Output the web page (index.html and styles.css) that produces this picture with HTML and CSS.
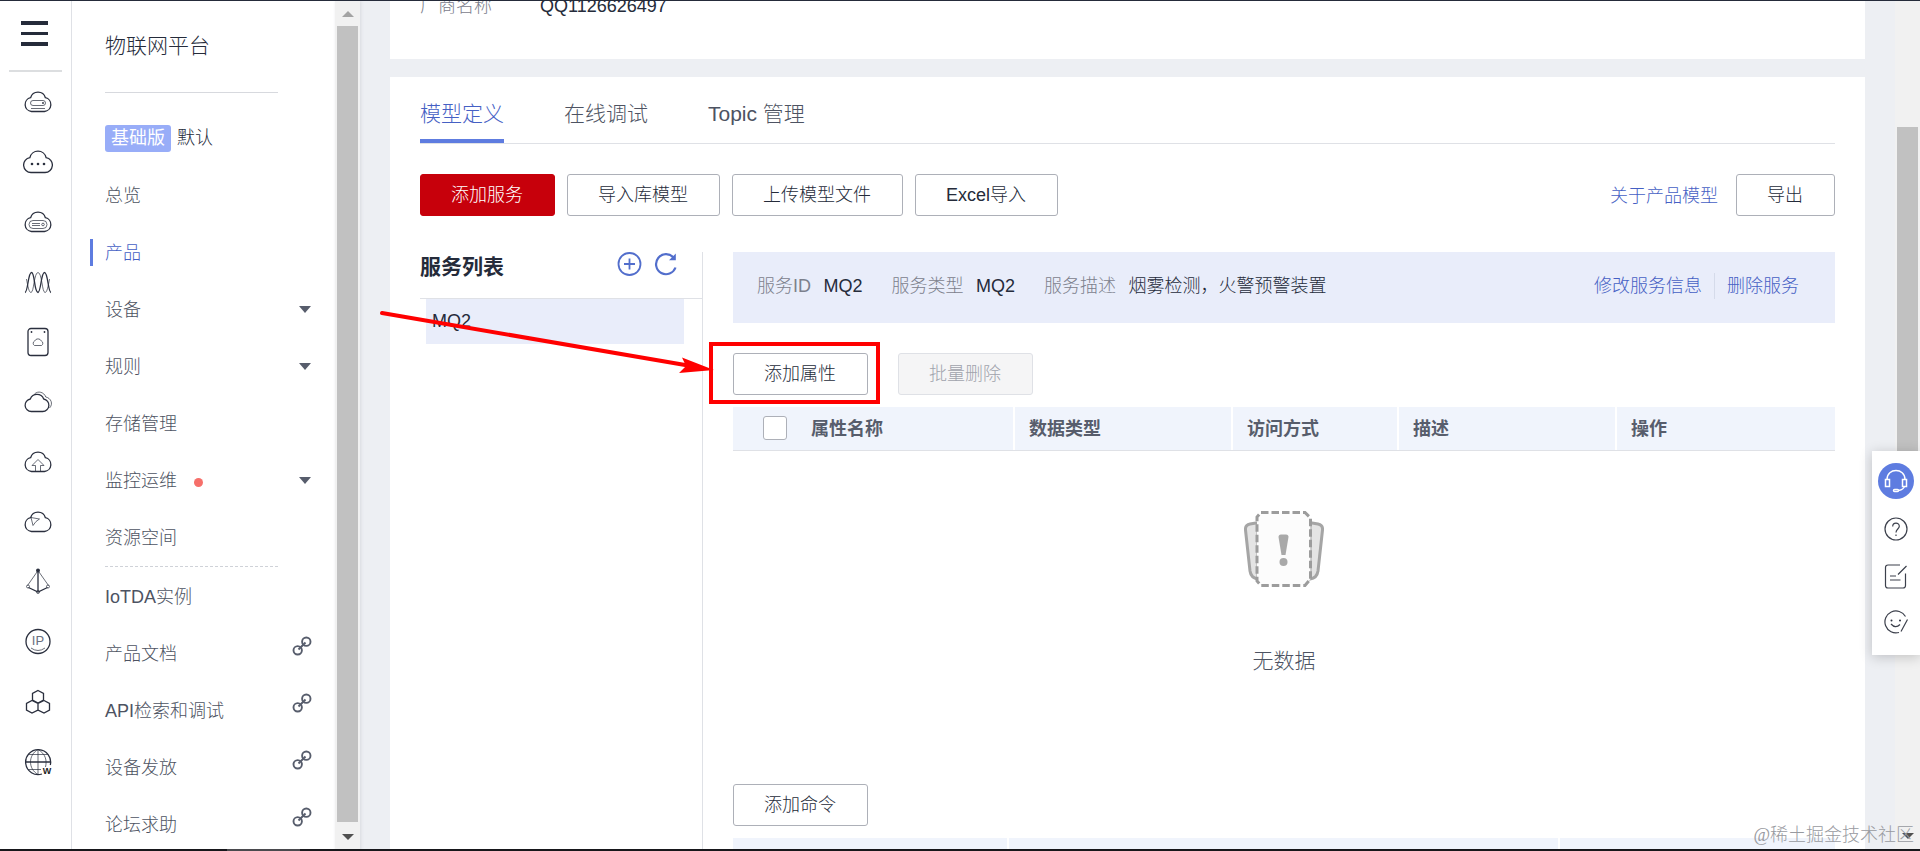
FILE: index.html
```html
<!DOCTYPE html>
<html lang="zh-CN">

<head>
  <meta charset="UTF-8">
  <meta name="viewport" content="width=device-width, initial-scale=1.0">
  <title>物联网平台</title>
  <link rel="stylesheet" href="styles.css">
</head>

<body>
  <!-- shared icon shapes -->
  <svg class="defs" width="0" height="0">
    <symbol id="cloud" viewBox="0 0 30 30">
      <path d="M8.5 24.5A7 7 0 0 1 7.6 10.7A7.7 7.7 0 0 1 22.4 10.7A7 7 0 0 1 21.5 24.5Z" />
    </symbol>
    <symbol id="link" viewBox="0 0 20 20">
      <circle cx="5.700" cy="14.300" r="4.200" />
      <circle cx="14.300" cy="5.700" r="4.200" />
      <path d="M6.500 13.500L13.500 6.500" />
    </symbol>
  </svg>

  <nav class="rail">
    <div class="hamburger"><span></span><span></span><span></span></div>
    <div class="rail-icons">
      <svg viewBox="0 0 30 30"><use href="#cloud" /><g class="thin"><rect x="7.500" y="13.500" width="15" height="5" rx="2.500" /><path d="M8 21.500h14" /></g><circle class="dot" cx="20" cy="16" r=".9" /></svg>
      <svg viewBox="0 0 30 30"><path d="M8 25.500A7.500 7.500 0 0 1 6.900 10.600A8.300 8.300 0 0 1 23.100 10.600A7.500 7.500 0 0 1 22 25.500Z" /><circle class="dot" cx="9" cy="17" r="1.300" /><circle class="dot" cx="15" cy="17" r="1.300" /><circle class="dot" cx="21" cy="17" r="1.300" /></svg>
      <svg viewBox="0 0 30 30"><use href="#cloud" /><g class="thin"><rect x="6" y="13.500" width="18" height="8" rx="4" /><path d="M9 16.500h8M9 18.500h8" /><circle cx="20" cy="17.500" r="1.300" /></g></svg>
      <svg viewBox="0 0 30 30"><path d="M2 25.500C5 25 5 5.500 8.500 5.500S11 25 15 25.500C18 25 18 5.500 21.500 5.500S25 25 28 25.500" /><g class="thin"><path d="M3.500 12C5 20 6 25.500 8 25.500C11 25.500 11 5.500 15 5.500S19 25.500 22 25.500C24 25.500 25 20 26.500 12" /></g></svg>
      <svg viewBox="0 0 30 30"><rect x="5" y="1.500" width="20" height="27" rx="3" /><path class="thin" d="M11.500 18.500A2.500 2.500 0 0 1 11.700 14A3.600 3.600 0 0 1 18.300 14A2.500 2.500 0 0 1 18.500 18.500Z" /><circle class="dot" cx="8.500" cy="5" r=".9" /><circle class="dot" cx="21.500" cy="5" r=".9" /></svg>
      <svg viewBox="0 0 30 30"><path d="M8.300 24.500A6.300 6.300 0 0 1 7.300 12A7.200 7.200 0 0 1 20.700 12A6.300 6.300 0 0 1 19.700 24.500Z" /><path class="thin" d="M11.500 7C15 3.500 21 5 22.800 10C28 11 30.500 17 26.500 21" /></svg>
      <svg viewBox="0 0 30 30"><use href="#cloud" /><path class="thin" d="M12.500 24V18.500H9L15 12.500L21 18.500H17.500V24" /></svg>
      <svg viewBox="0 0 30 30"><use href="#cloud" /><path class="thin" d="M8 10.500L16.500 12L13 14.500L10 18.500Z" /></svg>
      <svg viewBox="0 0 30 30"><path d="M15 3.500V24M5.500 20.500L15 25L24.500 20.500" /><g class="thin"><path d="M14 5L4.500 18.500M16 5L25.500 18.500" /><circle cx="5" cy="19.500" r="1.500" /><circle cx="25" cy="19.500" r="1.500" /><circle cx="15" cy="25" r="1.500" /></g><circle class="dot" cx="15" cy="3.500" r="2" /></svg>
      <svg viewBox="0 0 30 30"><circle cx="15" cy="14.500" r="12" /><path class="thin" d="M8 21Q15 26 22 21" /><text x="15" y="18" text-anchor="middle">IP</text></svg>
      <svg viewBox="0 0 30 30"><path d="M15 3.500L20.500 6.500V13L15 16L9.500 13V6.500ZM9 13.500L15 16.500V23L9 26L3.500 23V16.500ZM21 13.500L26.500 16.500V23L21 26L15 23V16.500Z" /></svg>
      <svg viewBox="0 0 30 30"><path d="M27.300 18A12.500 12.500 0 1 0 19 27M2.500 15H27.500" /><path class="thin" d="M15 2.500V27.500M15 2.500C5 8 5 22 15 27.500M15 2.500C23 7 24 14 22.500 20M5 7.500H25M5 22.500H18" /><text class="w" x="24" y="26.500" text-anchor="middle">W</text></svg>
    </div>
  </nav>

  <aside class="menu">
    <h1 class="menu-title">物联网平台</h1>
    <div class="edition"><span class="badge">基础版</span><span class="edition-name">默认</span></div>
    <ul class="menu-list">
      <li><span>总览</span></li>
      <li class="active"><span>产品</span></li>
      <li><span>设备</span><i class="caret"></i></li>
      <li><span>规则</span><i class="caret"></i></li>
      <li><span>存储管理</span></li>
      <li><span>监控运维</span><i class="red-dot"></i><i class="caret"></i></li>
      <li><span>资源空间</span></li>
    </ul>
    <ul class="menu-list extra">
      <li><span>IoTDA实例</span></li>
      <li><span>产品文档</span><svg class="link"><use href="#link" /></svg></li>
      <li><span>API检索和调试</span><svg class="link"><use href="#link" /></svg></li>
      <li><span>设备发放</span><svg class="link"><use href="#link" /></svg></li>
      <li><span>论坛求助</span><svg class="link"><use href="#link" /></svg></li>
    </ul>
  </aside>

  <div class="scrollbar side-scroll">
    <i class="arrow up"></i>
    <div class="thumb"></div>
    <i class="arrow down"></i>
  </div>

  <main class="content">
    <section class="panel vendor">
      <span class="vendor-label">厂商名称</span>
      <span>QQ1126626497</span>
    </section>

    <section class="panel model">
      <div class="tabs">
        <a class="tab current">模型定义</a>
        <a class="tab">在线调试</a>
        <a class="tab">Topic 管理</a>
      </div>

      <div class="toolbar">
        <button class="btn primary">添加服务</button>
        <button class="btn">导入库模型</button>
        <button class="btn">上传模型文件</button>
        <button class="btn">Excel导入</button>
        <a class="about">关于产品模型</a>
        <button class="btn">导出</button>
      </div>

      <div class="columns">
        <div class="services">
          <div class="services-head">
            <h2>服务列表</h2>
            <svg width="26" height="26" viewBox="0 0 26 26"><circle cx="12.500" cy="13" r="11" /><path d="M12.500 7.500v11M7 13h11" /></svg>
            <svg class="refresh" width="26" height="26" viewBox="0 0 26 26"><path d="M22.500 16.500A10 10 0 1 1 20.500 6.500" /><path class="fill" d="M22.800 2.500V9.300H16Z" /></svg>
          </div>
          <div class="service-item">MQ2</div>
        </div>

        <div class="detail">
          <div class="info">
            <span class="info-label">服务ID</span><span class="info-value">MQ2</span>
            <span class="info-label">服务类型</span><span class="info-value">MQ2</span>
            <span class="info-label">服务描述</span><span class="info-value">烟雾检测，火警预警装置</span>
            <div class="info-links"><a>修改服务信息</a><a>删除服务</a></div>
          </div>

          <div class="actions">
            <button class="btn">添加属性</button>
            <button class="btn" disabled>批量删除</button>
          </div>

          <div class="table-head">
            <div><i class="checkbox"></i>属性名称</div>
            <div>数据类型</div>
            <div>访问方式</div>
            <div>描述</div>
            <div>操作</div>
          </div>

          <div class="empty">
            <svg width="80" height="76" viewBox="0 0 80 76">
              <path class="back" d="M12 12L6 13Q1 14 1.500 19L6 60Q7 67 14 68V12Z" />
              <path class="back" d="M68 12L74 13Q79 14 78.500 19L74 60Q73 67 66 68V12Z" />
              <path class="front" d="M17 1.500H61L66.500 7V68L61 74.500H17L13 70V6Z" />
              <path class="mark" d="M34.500 26Q34.500 23.500 37 23.500H42Q44.500 23.500 44.500 26L41.500 44H37.500Z" />
              <circle class="mark" cx="39.500" cy="51" r="4" />
            </svg>
            <p>无数据</p>
          </div>

          <button class="btn add-command">添加命令</button>
          <div class="table-head command-head">
            <div></div>
            <div></div>
            <div></div>
          </div>
        </div>
      </div>
    </section>
  </main>

  <div class="scrollbar page-scroll">
    <div class="thumb"></div>
    <i class="arrow down"></i>
  </div>

  <div class="helper">
    <span class="service-btn">
      <svg width="24" height="24" viewBox="0 0 24 24"><path d="M3 10.500C3 -1.500 21 -1.500 21 10.500M20.500 17C20 20 17.500 21 14.500 21.500" /><rect x="1.500" y="10.500" width="4" height="7" /><rect x="18.500" y="10.500" width="4" height="7" /><rect x="9.500" y="20.500" width="5" height="2" rx="1" /></svg>
    </span>
    <svg width="26" height="26" viewBox="0 0 26 26"><circle cx="13" cy="13" r="11" /><path d="M9.700 10.500C9.700 6 16.300 6 16.300 10.300C16.300 13 13 13.200 13 16.500M13 18.500v1.500" /></svg>
    <svg width="26" height="26" viewBox="0 0 26 26"><path d="M17 2H5Q2.500 2 2.500 4.500V22.500Q2.500 25 5 25H20Q22.500 25 22.500 22.500V10.500M23.500 3L15 11.500M7 13H13M7 17H17.500" /></svg>
    <svg width="26" height="26" viewBox="0 0 26 26"><path d="M22.500 6.500A11 11 0 1 0 16 22.500M24.500 9.500L18 21.500M8 14Q12.500 19 17 14.500" /><circle class="dot" cx="8.500" cy="10.500" r="1" /><circle class="dot" cx="17" cy="10.500" r="1" /></svg>
  </div>

  <!-- red pointer and box around the add button -->
  <svg class="pointer" width="336" height="70" viewBox="0 0 336 70">
    <path class="shaft" d="M3 5L312 58" />
    <path class="head" d="M303 49.500L335 62L300 65L307 58Z" />
  </svg>
  <div class="red-box"></div>

  <div class="watermark">@稀土掘金技术社区</div>
  <div class="bottom-line"></div>
</body>

</html>
```

FILE: styles.css
```css
* {
  box-sizing: border-box;
}

body {
  margin: 0;
  height: 851px;
  display: flex;
  overflow: hidden;
  position: relative;
  border-top: 1px solid #252b3a;
  background-color: #edeff3;
  color: #252b3a;
  font-family: "Liberation Sans", "Noto Sans CJK SC", sans-serif;
  font-size: 18px;
  font-weight: 300;
}

h1,
h2,
p,
ul {
  margin: 0;
  padding: 0;
}

svg {
  fill: none;
  flex-shrink: 0;
}

.defs {
  position: absolute;
}

/* Icon rail */
.rail {
  width: 72px;
  background-color: #fff;
  border-right: 1px solid #dfe1e6;
}

.hamburger {
  width: 53px;
  height: 71px;
  margin-left: 9px;
  padding: 20px 14px 0 12px;
  border-bottom: 2px solid #dcdee0;
  display: flex;
  flex-direction: column;
  gap: 7px;
}

.hamburger span {
  height: 3.5px;
  background-color: #252b3a;
}

.rail-icons {
  margin: 15px 0 0 22.5px;
  display: flex;
  flex-direction: column;
  gap: 30px;
}

.rail-icons svg {
  width: 30px;
  height: 30px;
  stroke: #2a2f3e;
  stroke-width: 1.3;
}

.rail-icons .thin {
  stroke-width: .7;
}

.dot {
  fill: #2a2f3e;
  stroke: none;
}

.rail-icons text {
  fill: #6a6f7e;
  stroke: none;
  font-size: 13px;
}

.rail-icons .w {
  fill: #222;
  font-size: 9px;
  font-weight: bold;
}

/* Side menu */
.menu {
  width: 263px;
  padding-left: 33px;
  background-color: #fff;
}

.menu-title {
  width: 173px;
  height: 92px;
  line-height: 90px;
  border-bottom: 1px solid #d7d9de;
  font-size: 21px;
  font-weight: 300;
}

.edition {
  display: flex;
  gap: 6px;
  height: 27px;
  line-height: 26px;
  margin: 32px 0 14px;
}

.badge {
  width: 66px;
  height: 27px;
  line-height: 27px;
  text-align: center;
  border-radius: 3px;
  background-color: #98adf8;
  color: #fff;
  font-weight: 400;
}

.menu-list {
  list-style: none;
  color: #4d5362;
}

.menu-list li {
  height: 57px;
  width: 206px;
  display: flex;
  align-items: center;
}

.menu-list span {
  margin-bottom: 2px;
}

.menu-list .active {
  width: 221px;
  margin-left: -15px;
  color: #4560c4;
}

.active::before {
  content: "";
  width: 3px;
  height: 27px;
  margin: 2px 12px 0 0;
  background-color: #5e7ce0;
}

.extra::before {
  content: "";
  display: block;
  width: 173px;
  margin-top: 1px;
  border-top: 1px dashed #cfd2d8;
}

.caret {
  margin: 1px 0 0 auto;
  border: 6px solid transparent;
  border-top: 7px solid #575d6c;
  border-bottom: none;
}

.red-dot {
  width: 9px;
  height: 9px;
  margin: 5px 0 0 17px;
  border-radius: 50%;
  background-color: #f66f6a;
}

.link {
  width: 20px;
  height: 20px;
  margin: 0 -1px 14px auto;
  stroke: #575d6c;
  stroke-width: 1.9;
}

/* Scrollbars */
.scrollbar {
  display: flex;
  flex-direction: column;
  align-items: center;
  background-color: #f1f1f1;
}

.side-scroll {
  width: 25px;
  padding-top: 10px;
  box-shadow: 1px 0 3px #d8dadf;
}

.side-scroll .thumb {
  width: 21px;
  height: 796px;
  margin: 9px 0 12px;
  background-color: #c1c1c1;
}

.arrow {
  border: 6px solid transparent;
}

.arrow.up {
  border-top: none;
  border-bottom-color: #a3a3a3;
}

.arrow.down {
  border-bottom: none;
  border-top-color: #505050;
}

.page-scroll {
  width: 25px;
  padding-top: 126px;
}

.page-scroll .thumb {
  width: 21px;
  height: 380px;
  margin-bottom: 326px;
  background-color: #c1c1c1;
}

/* Main content */
.content {
  flex: 1;
  padding: 0 30px;
  display: flex;
  flex-direction: column;
  gap: 18px;
}

.panel {
  background-color: #fff;
  padding: 0 30px;
}

.vendor {
  height: 58px;
  line-height: 26px;
  display: flex;
  flex-shrink: 0;
}

.vendor span {
  margin-top: -8px;
}

.vendor .vendor-label {
  width: 120px;
  color: #7c808c;
}

.model {
  flex: 1;
}

.tabs {
  display: flex;
  gap: 60px;
  height: 67px;
  border-bottom: 1px solid #dfe1e6;
  font-size: 21px;
  line-height: 73px;
  color: #4d5362;
}

.tab {
  height: 66px;
}

.tab.current {
  color: #4560c4;
  border-bottom: 4px solid #5e7ce0;
}

.toolbar {
  display: flex;
  align-items: center;
  gap: 12px;
  margin-top: 30px;
}

.btn {
  height: 42px;
  padding: 0 31px 4px 30px;
  border: 1px solid #adb0b8;
  border-radius: 3px;
  background-color: #fff;
  color: #252b3a;
  font: inherit;
  white-space: nowrap;
}

.btn.primary {
  background-color: #c7000b;
  border-color: #c7000b;
  color: #fff;
}

.btn:disabled {
  background-color: #f5f5f6;
  border-color: #dfe1e6;
  color: #a0a3ac;
}

.about {
  margin: 0 6px 3px auto;
  color: #4560c4;
}

.columns {
  display: flex;
  margin-top: 36px;
  height: 600px;
}

.services {
  width: 283px;
  border-right: 1px solid #dfe1e6;
}

.services-head {
  display: flex;
  gap: 10px;
  height: 47px;
  padding-right: 23px;
  border-bottom: 1px solid #dfe1e6;
}

.services-head h2 {
  margin-right: auto;
  font-size: 21px;
  line-height: 30px;
  font-weight: bold;
}

.services-head svg {
  margin-top: -1px;
  stroke: #526ecc;
  stroke-width: 1.8;
}

.services-head .refresh {
  stroke-width: 2.2;
}

.services-head .fill {
  fill: #526ecc;
  stroke: none;
}

.service-item {
  height: 45px;
  margin: 0 18px 0 6px;
  padding-left: 6px;
  line-height: 45px;
  background-color: #e9edfa;
}

.detail {
  flex: 1;
  margin-left: 30px;
}

.info {
  display: flex;
  height: 71px;
  padding: 0 36px 0 24px;
  line-height: 68px;
  background-color: #e9edfa;
}

.info-label {
  margin-right: 12.5px;
  color: #7c808c;
}

.info-value {
  margin-right: 29px;
}

.info-links {
  display: flex;
  align-items: center;
  margin: 0 0 3px auto;
  line-height: 26px;
  color: #4560c4;
}

.info-links a + a {
  margin-left: 12px;
  padding-left: 12px;
  border-left: 1px solid #d5dbea;
}

.actions {
  display: flex;
  gap: 30px;
  margin: 30px 0 12px;
}

.table-head {
  display: grid;
  grid-template-columns: 282px 218px 166px 218px 1fr;
  height: 44px;
  border-bottom: 1px solid #dfe1e6;
  background-color: #f0f4fc;
  color: #575d6c;
  font-weight: bold;
}

.table-head > div {
  display: flex;
  align-items: center;
  padding: 0 0 3px 14px;
  border-right: 2px solid #fff;
}

.table-head > div:last-child {
  border-right: none;
}

.table-head > div:first-child {
  padding-left: 30px;
}

.checkbox {
  width: 24px;
  height: 24px;
  margin: 2px 24px 0 0;
  border: 1px solid #adb0b8;
  border-radius: 3px;
  background-color: #fff;
}

.empty {
  height: 333px;
  padding-top: 60px;
  text-align: center;
  font-size: 21px;
  color: #4d5362;
}

.empty svg {
  display: block;
  margin: 0 auto 57px;
}

.empty p {
  line-height: 34px;
}

.back {
  fill: #e4e4e4;
  stroke: #a5a5a5;
  stroke-width: 3;
}

.front {
  fill: #fcfcfc;
  stroke: #9c9c9c;
  stroke-width: 3;
  stroke-dasharray: 7.5 3;
}

.mark {
  fill: #a9a9a9;
}

.add-command {
  display: block;
}

.command-head {
  margin-top: 12px;
  grid-template-columns: 276px 551px 1fr;
}

/* Floating help bar */
.helper {
  position: absolute;
  top: 450px;
  right: 0;
  width: 48px;
  height: 204px;
  padding-top: 12px;
  display: flex;
  flex-direction: column;
  align-items: center;
  background-color: #fff;
  box-shadow: 0 2px 12px rgba(0, 0, 0, .2);
}

.helper svg {
  stroke: #3c404c;
  stroke-width: 1.2;
  margin-bottom: 21px;
}

.service-btn {
  width: 36px;
  height: 36px;
  padding: 6px;
  margin-bottom: 17px;
  border-radius: 50%;
  background-color: #5e7ce0;
}

.service-btn svg {
  stroke: #fff;
  stroke-width: 1.5;
}

/* Annotation */
.pointer {
  position: absolute;
  left: 379px;
  top: 307px;
}

.shaft {
  stroke: #f00;
  stroke-width: 4;
  stroke-linecap: round;
}

.head {
  fill: #f00;
}

.red-box {
  position: absolute;
  left: 709px;
  top: 341px;
  width: 171px;
  height: 62px;
  border: 4px solid #f00;
}

.watermark {
  position: absolute;
  right: 6px;
  top: 821px;
  line-height: 26px;
  color: #989aa0;
  font-family: "Liberation Serif", "Noto Sans CJK SC", serif;
}

.bottom-line {
  position: absolute;
  left: 0;
  right: 0;
  bottom: 0;
  height: 2px;
  background: linear-gradient(90deg, #17171b 227px, #4a4a4e 227px 300px, #17171b 300px);
}
```
